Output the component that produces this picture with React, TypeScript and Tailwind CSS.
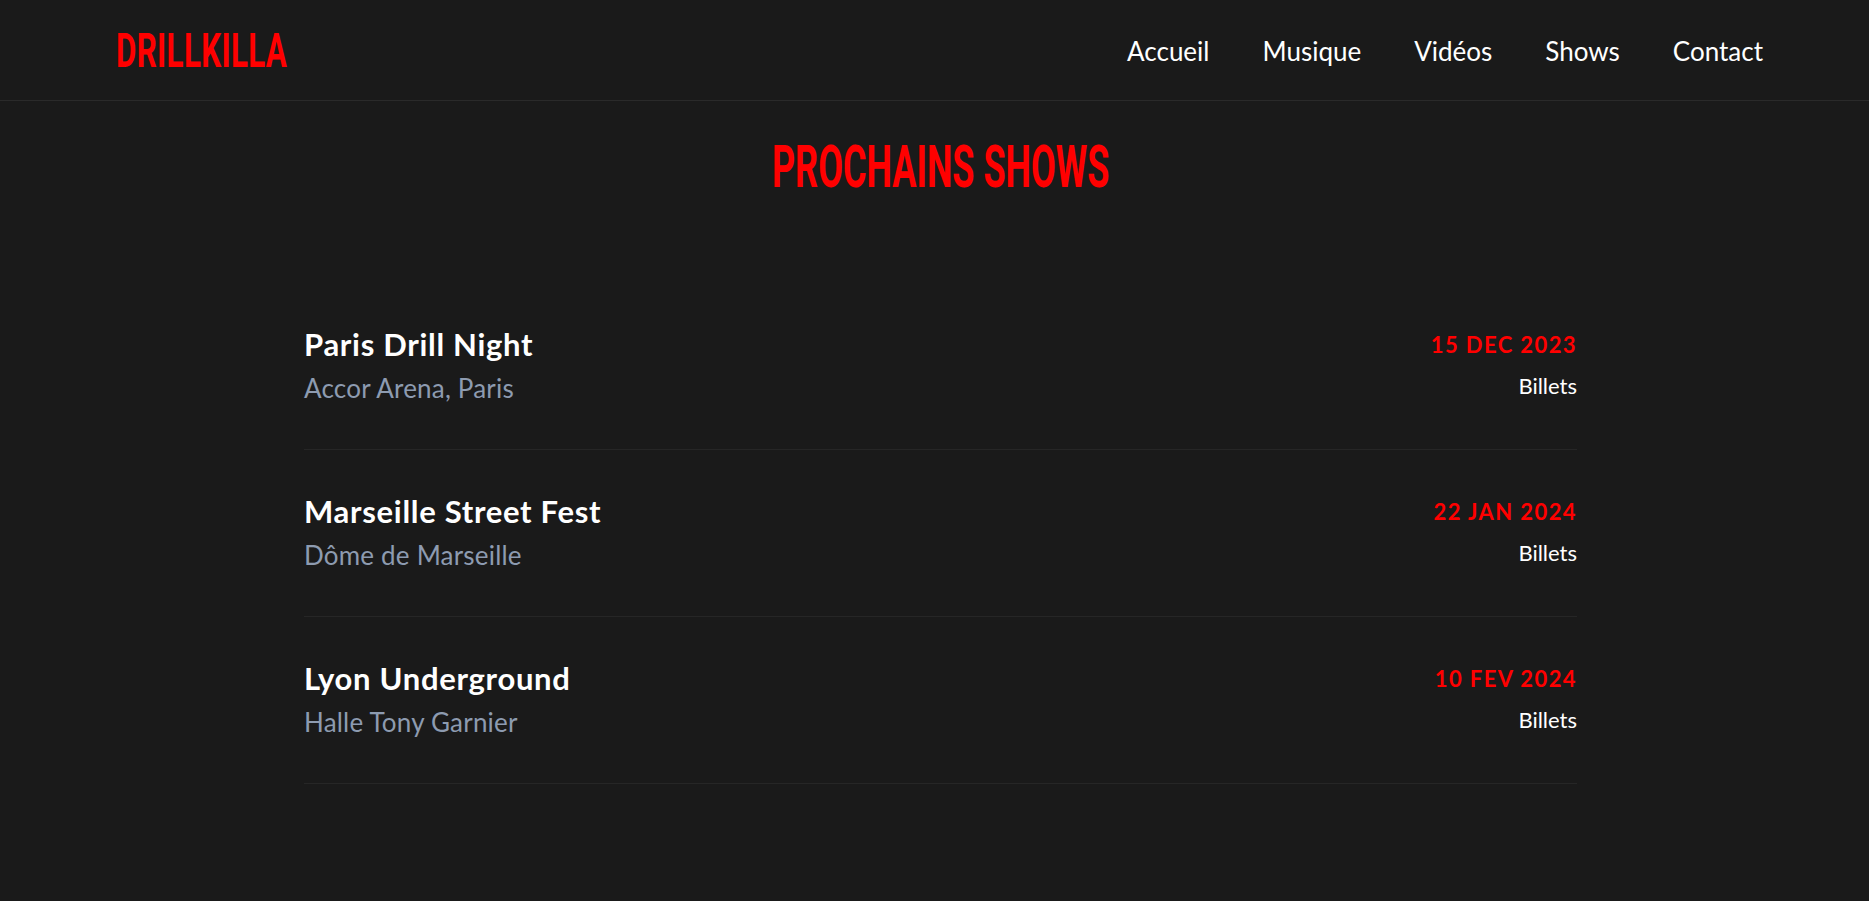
const shows = [
  { title: 'Paris Drill Night', venue: 'Accor Arena, Paris', date: '15 DEC 2023' },
  { title: 'Marseille Street Fest', venue: 'Dôme de Marseille', date: '22 JAN 2024' },
  { title: 'Lyon Underground', venue: 'Halle Tony Garnier', date: '10 FEV 2024' },
]

const links = ['Accueil', 'Musique', 'Vidéos', 'Shows', 'Contact']

export default function App() {
  return (
    <div className="min-h-screen bg-[#1a1a1a] text-white font-['Lato','Open_Sans',sans-serif]">
      {/* Header */}
      <header className="h-[101px] flex items-center justify-between pl-[116px] pr-[106px] border-b border-[#2a2a2a]">
        <a href="#" className="inline-block origin-left scale-x-[0.64] text-[49px] leading-none font-bold text-[#ff0000] font-['Roboto',sans-serif] tracking-[0.5px]">
          DRILLKILLA
        </a>
        <nav className="flex items-center gap-[53px] pt-[1px]">
          {links.map((l) => (
            <a key={l} href="#" className="text-[26px] leading-none text-white">
              {l}
            </a>
          ))}
        </nav>
      </header>

      {/* Shows */}
      <main className="pl-[304px] pr-[292px] pt-[36px] pb-16">
        <div className="text-center">
          <h2 className="inline-block scale-x-[0.61] text-[59px] leading-none font-bold text-[#ff0000] font-['Roboto',sans-serif]">
            PROCHAINS SHOWS
          </h2>
        </div>

        <div className="mt-[87px]">
          {shows.map((s) => (
            <div
              key={s.title}
              className="flex items-start justify-between pt-[44px] pb-[46px] border-b border-[#262626]"
            >
              <div>
                <h3 className="text-[31px] leading-[34px] font-bold tracking-[0.7px]">{s.title}</h3>
                <p className="mt-[12px] text-[26px] leading-[30px] text-[#8d9bb0] tracking-[0.2px]">{s.venue}</p>
              </div>
              <div className="flex flex-col items-end pt-[5px]">
                <span className="text-[22px] leading-[26px] font-bold text-[#ff0000] tracking-[1.4px]">{s.date}</span>
                <a href="#" className="mt-[14px] text-[22px] leading-[28px] text-white">
                  Billets
                </a>
              </div>
            </div>
          ))}
        </div>
      </main>
    </div>
  )
}
